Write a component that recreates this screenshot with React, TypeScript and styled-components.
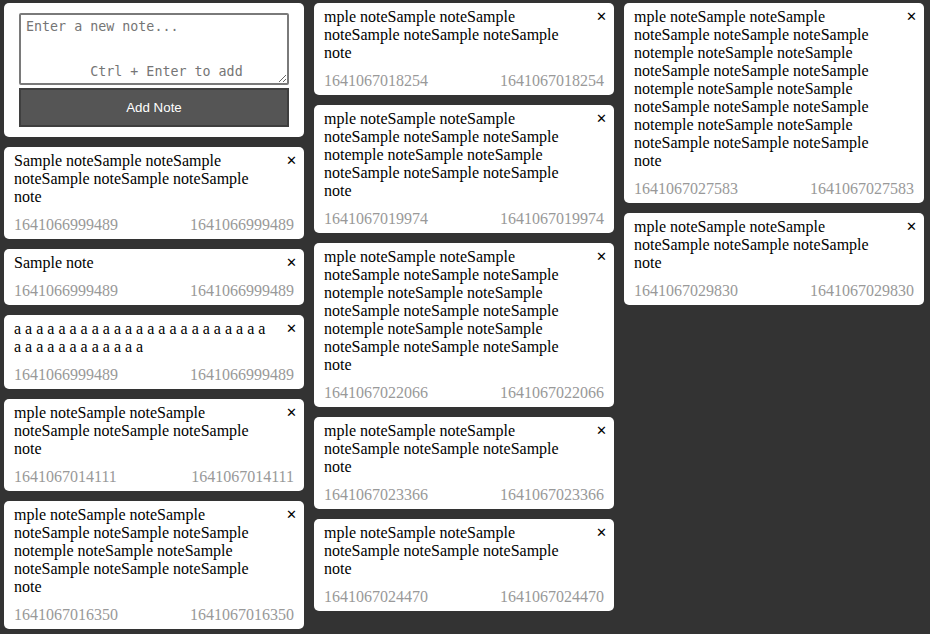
import React from "react";
import styled, { createGlobalStyle } from "styled-components";

const GlobalStyle = createGlobalStyle`
  html, body { margin: 0; padding: 0; background: #333333; }
  body { font-family: "Liberation Serif", "Times New Roman", serif; font-size: 16px; }
`;

const Board = styled.div`
  display: flex;
  align-items: flex-start;
  gap: 10px;
  padding: 3px 4px;
`;

const Column = styled.div`
  width: 300px;
  display: flex;
  flex-direction: column;
  gap: 10px;
`;

const Card = styled.div`
  background: #ffffff;
  border-radius: 5px;
  box-sizing: border-box;
`;

const FormCard = styled(Card)`
  padding: 10px 15px;
  display: flex;
  flex-direction: column;
  gap: 3px;
`;

const Input = styled.textarea`
  box-sizing: border-box;
  width: 270px;
  height: 72px;
  margin: 0;
  padding: 4px 5px 2px;
  border: 2px solid #7a7a7a;
  border-radius: 2px;
  font-family: "DejaVu Sans Mono", monospace;
  font-size: 13.333px;
  color: #000;
  &::placeholder { color: #757575; }
`;

const AddButton = styled.button`
  box-sizing: border-box;
  width: 270px;
  height: 39px;
  margin: 0;
  background: #555555;
  border: 2px solid #3f3f3f;
  color: #ffffff;
  font-family: "Liberation Sans", Arial, sans-serif;
  font-size: 13.333px;
  cursor: pointer;
`;

const NoteCard = styled(Card)`
  padding: 5px 10px 5px 10px;
  display: flex;
  flex-direction: column;
  gap: 10px;
  line-height: 18px;
`;

const NoteHead = styled.div`
  display: flex;
  align-items: flex-start;
  gap: 10px;
`;

const NoteText = styled.div`
  flex: 1;
  color: #000;
`;

const Close = styled.button`
  background: none;
  border: none;
  padding: 0;
  margin: 0 -3px 0 0;
  height: 18px;
  width: 15px;
  font-family: "DejaVu Sans", sans-serif;
  font-size: 13px;
  font-weight: bold;
  color: #000;
  line-height: 18px;
  cursor: pointer;
  display: flex;
  justify-content: flex-end;
  align-items: center;
`;

const Meta = styled.div`
  display: flex;
  justify-content: space-between;
  color: #999999;
`;

type Note = { text: string; ts: string };

const S = "Sample note";
const M = "mple note";
const rep = (s: string, n: number) => Array(n).fill(s).join("");
const block = M + rep(S, 5);

const col1: Note[] = [
  { text: rep(S, 6), ts: "1641066999489" },
  { text: S, ts: "1641066999489" },
  { text: Array(35).fill("a").join(" "), ts: "1641066999489" },
  { text: block, ts: "1641067014111" },
  { text: rep(block, 2), ts: "1641067016350" },
];

const col2: Note[] = [
  { text: block, ts: "1641067018254" },
  { text: rep(block, 2), ts: "1641067019974" },
  { text: rep(block, 3), ts: "1641067022066" },
  { text: block, ts: "1641067023366" },
  { text: block, ts: "1641067024470" },
];

const col3: Note[] = [
  { text: rep(block, 4), ts: "1641067027583" },
  { text: block, ts: "1641067029830" },
];

const NoteItem: React.FC<{ note: Note }> = ({ note }) => (
  <NoteCard>
    <NoteHead>
      <NoteText>{note.text}</NoteText>
      <Close aria-label="delete">✕</Close>
    </NoteHead>
    <Meta>
      <span>{note.ts}</span>
      <span>{note.ts}</span>
    </Meta>
  </NoteCard>
);

export default function App() {
  return (
    <>
      <GlobalStyle />
      <Board>
        <Column>
          <FormCard>
            <Input placeholder={"Enter a new note...\n\n\n        Ctrl + Enter to add"} />
            <AddButton>Add Note</AddButton>
          </FormCard>
          {col1.map((n, i) => (
            <NoteItem key={i} note={n} />
          ))}
        </Column>
        <Column>
          {col2.map((n, i) => (
            <NoteItem key={i} note={n} />
          ))}
        </Column>
        <Column>
          {col3.map((n, i) => (
            <NoteItem key={i} note={n} />
          ))}
        </Column>
      </Board>
    </>
  );
}
